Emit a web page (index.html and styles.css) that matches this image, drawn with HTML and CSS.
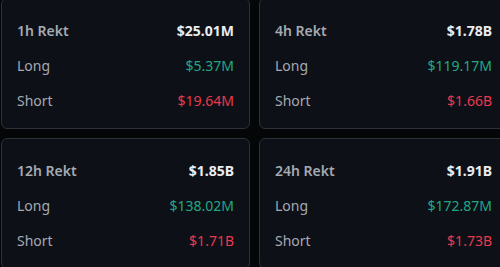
FILE: index.html
```html
<!DOCTYPE html>
<html>
<head>
<meta charset="utf-8">
<link rel="stylesheet" href="styles.css">
</head>
<body>
<div class="grid">
  <div class="card">
    <div class="row head"><span class="label">1h Rekt</span><span class="val">$25.01M</span></div>
    <div class="row"><span class="label">Long</span><span class="val up">$5.37M</span></div>
    <div class="row"><span class="label">Short</span><span class="val down">$19.64M</span></div>
  </div>
  <div class="card">
    <div class="row head"><span class="label">4h Rekt</span><span class="val">$1.78B</span></div>
    <div class="row"><span class="label">Long</span><span class="val up">$119.17M</span></div>
    <div class="row"><span class="label">Short</span><span class="val down">$1.66B</span></div>
  </div>
  <div class="card">
    <div class="row head"><span class="label">12h Rekt</span><span class="val">$1.85B</span></div>
    <div class="row"><span class="label">Long</span><span class="val up">$138.02M</span></div>
    <div class="row"><span class="label">Short</span><span class="val down">$1.71B</span></div>
  </div>
  <div class="card">
    <div class="row head"><span class="label">24h Rekt</span><span class="val">$1.91B</span></div>
    <div class="row"><span class="label">Long</span><span class="val up">$172.87M</span></div>
    <div class="row"><span class="label">Short</span><span class="val down">$1.73B</span></div>
  </div>
</div>
</body>
</html>
```
FILE: styles.css
```css
html, body {
  margin: 0;
  padding: 0;
  background: #050608;
  overflow: hidden;
}
body {
  font-family: "Noto Sans", "Open Sans", sans-serif;
  font-size: 14px;
  color: #b7bdc6;
}
.grid {
  display: grid;
  grid-template-columns: 249px 249px;
  grid-auto-rows: 131px;
  gap: 9px;
  margin: -2px 0 0 1px;
  width: 520px;
}
.card {
  box-sizing: border-box;
  background: #0d1016;
  border: 1px solid #2b3139;
  border-radius: 6px;
  padding: 14px 15px 10px 15px;
  display: flex;
  flex-direction: column;
}
.row {
  height: 36.5px;
  display: flex;
  align-items: center;
  justify-content: space-between;
}
.label {
  color: #a4aab3;
}
.head .label {
  font-weight: 600;
}
.head .val {
  font-weight: 700;
  color: #eaecef;
}
.val.up {
  color: #20a886;
}
.val.down {
  color: #e8394f;
}
```
